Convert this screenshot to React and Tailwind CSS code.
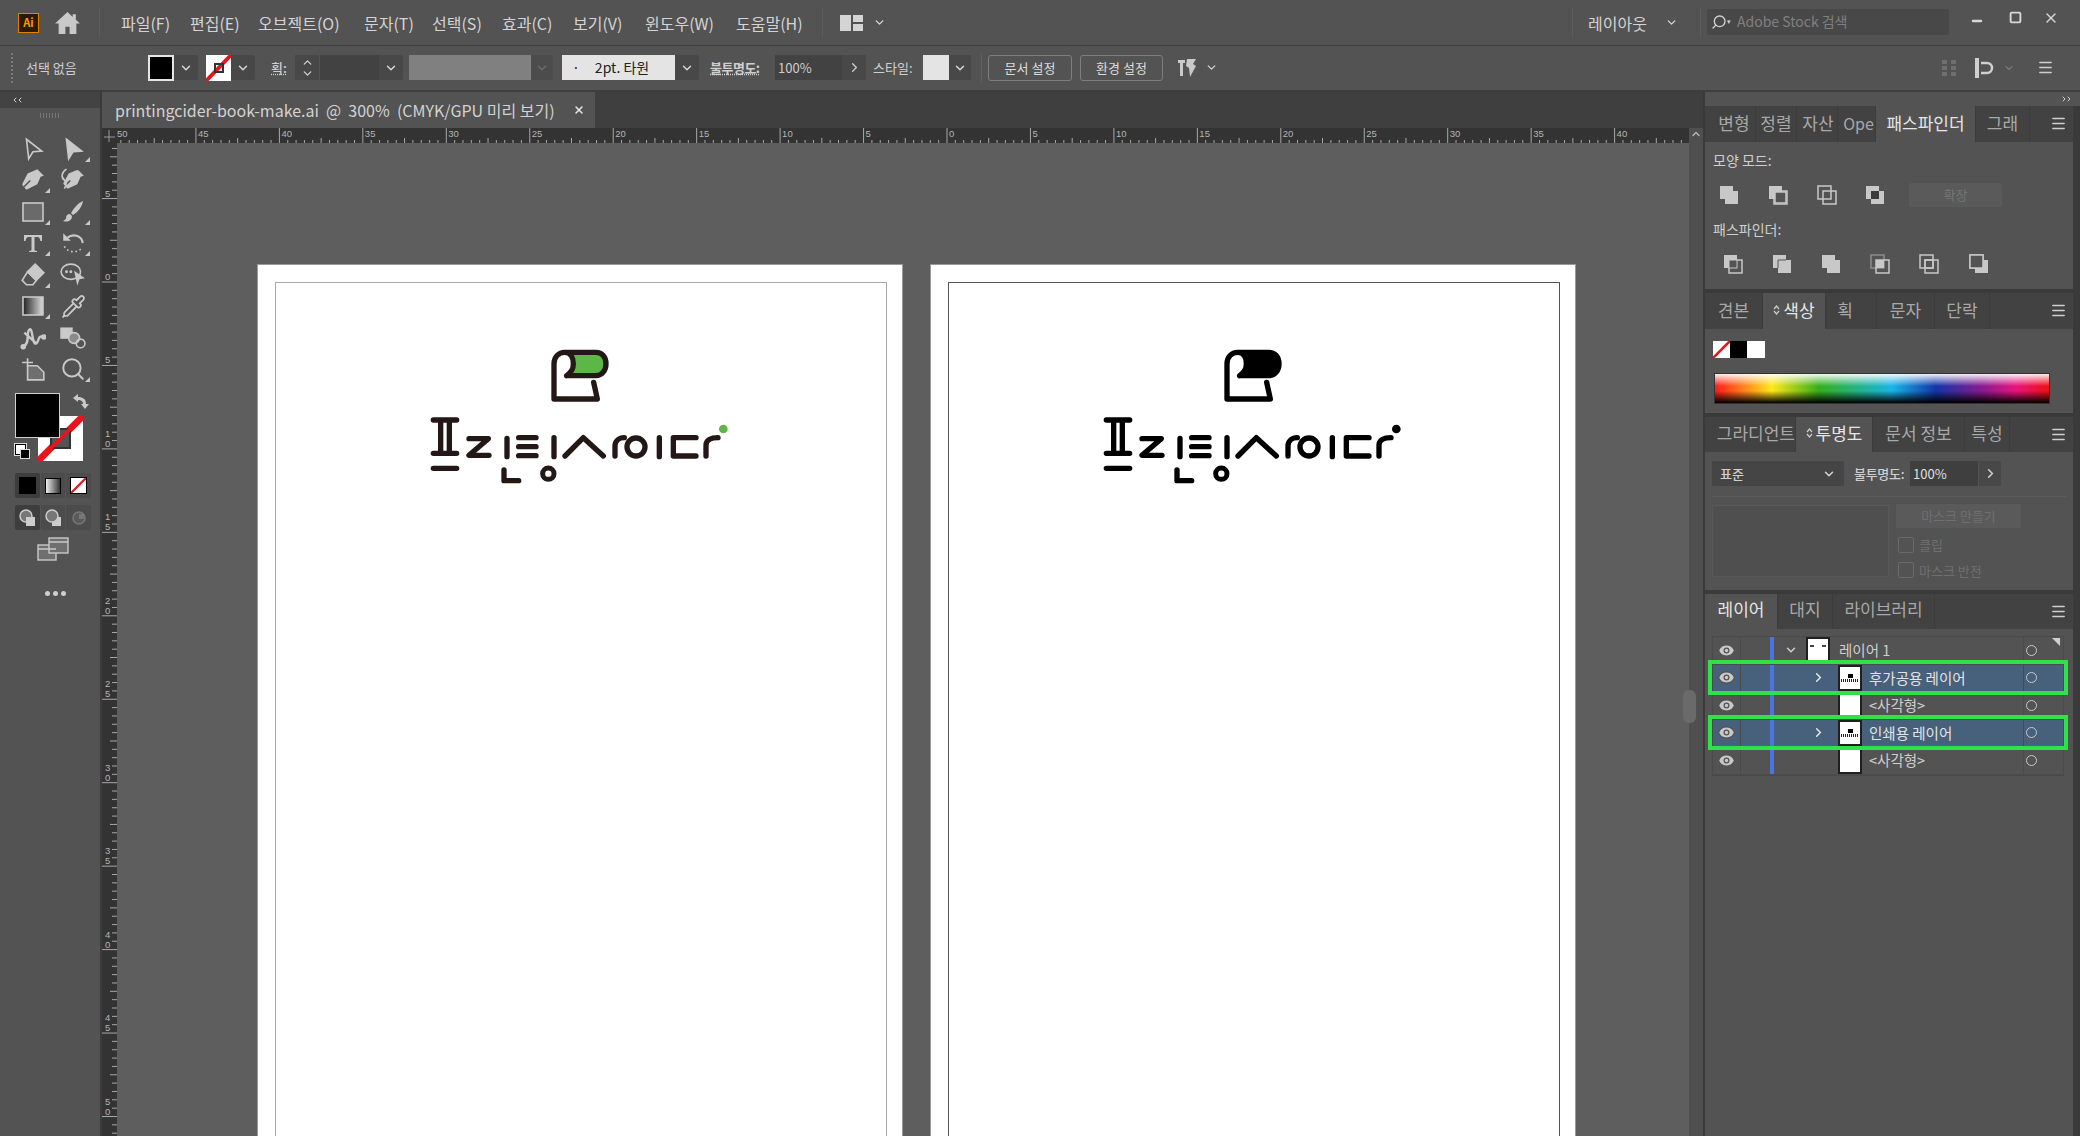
import { ChevronDown, ChevronRight, ChevronUp, ChevronLeft, Eye, Search, Pipette, Menu, Minus, Square, X } from 'lucide-react'

const icon = '#c9c9c9'

const menus = [
  ['파일(F)', 51], ['편집(E)', 50], ['오브젝트(O)', 88], ['문자(T)', 50], ['선택(S)', 52],
  ['효과(C)', 53], ['보기(V)', 54], ['윈도우(W)', 73], ['도움말(H)', 70],
]

function Chev({ size = 14, className = 'text-[#d8d8d8]' }) {
  return <ChevronDown size={size} strokeWidth={2.5} className={className} />
}

function NoneSwatch({ className }) {
  return (
    <svg viewBox="0 0 20 20" preserveAspectRatio="none" className={className}>
      <rect width="20" height="20" fill="#fff" />
      <line x1="0" y1="20" x2="20" y2="0" stroke="#e8141c" strokeWidth="3" />
    </svg>
  )
}

function TitleBar() {
  return (
    <div className="h-[45px] shrink-0 flex items-center bg-[#535353] text-[#d4d4d4] text-[16px] relative">
      <div className="ml-[18px] w-[21px] h-[20px] bg-[#2d1a05] border border-[#e67e00] flex items-center justify-center text-[11px] font-bold leading-none text-[#ff9a00]">Ai</div>
      <svg width="25" height="23" viewBox="0 0 24 22" fill="#c9c9c9" className="ml-[16px]">
        <path d="M12 1L0 12h3.500v10H10v-7h4v7h6.500V12H24l-4-3.700V3h-3v2.600z" />
      </svg>
      <div className="ml-[19px] w-px h-[30px] bg-[#5c5c5c]" />
      <div className="ml-[21px] flex gap-[18px]">
        {menus.map(([label, w]) => (
          <span key={label} style={{ width: w }} className="whitespace-nowrap leading-none">{label}</span>
        ))}
      </div>
      <div className="ml-[16px] w-px h-[30px] bg-[#5c5c5c]" />
      <svg width="24" height="18" viewBox="0 0 24 18" className="ml-[17px]">
        <rect x="0" y="1" width="11" height="16" fill="#d4d4d4" />
        <rect x="13" y="1" width="10" height="7" fill="#d4d4d4" />
        <rect x="13" y="10" width="10" height="7" fill="#d4d4d4" />
      </svg>
      <Chev size={13} className="ml-[9px] text-[#d8d8d8]" />
      <div className="ml-auto flex items-center pr-[6px]">
        <div className="w-px h-[30px] bg-[#5c5c5c] mr-[15px]" />
        <span className="w-[63px] whitespace-nowrap">레이아웃</span>
        <Chev size={13} className="ml-[14px]" />
        <div className="w-px h-[30px] bg-[#5c5c5c] ml-[22px] mr-[6px]" />
        <div className="w-[242px] h-[26px] bg-[#484848] rounded-[2px] flex items-center px-[4px] text-[14px] text-[#808080] mb-[2px]">
          <Search size={16} strokeWidth={2} className="text-[#d4d4d4] -scale-x-100" />
          <span className="text-[#d4d4d4] text-[7px] mr-[6px]">▾</span>
          Adobe Stock 검색
        </div>
        <div className="ml-[7px] w-[118px] h-[24px] mb-[10px] flex items-center text-[#d8d8d8]">
          <span className="w-[41px] flex justify-center"><Minus size={14} strokeWidth={4} className="mt-[6px]" /></span>
          <span className="w-[36px] flex justify-center"><Square size={13} strokeWidth={3.5} /></span>
          <span className="w-[36px] flex justify-center"><X size={16} strokeWidth={2} /></span>
        </div>
      </div>
    </div>
  )
}

function Seg({ w, ml = 0, className = '', children }) {
  return <div style={{ width: w, marginLeft: ml }} className={`h-[25px] shrink-0 flex items-center justify-center ${className}`}>{children}</div>
}

function ControlBar() {
  return (
    <div className="h-[47px] shrink-0 bg-[#535353] border-y border-[#3e3e3e] border-b-2 flex items-center text-[13px] text-[#cfcfcf] pb-[1px]">
      <div className="ml-[11px] h-[30px] border-l-2 border-dotted border-[#7a7a7a]" />
      <span className="ml-[13px] w-[58px] whitespace-nowrap">선택 없음</span>
      <div style={{ marginLeft: 64 }} className="w-[26px] h-[26px] shrink-0 bg-black border-2 border-[#e6e6e6]" />
      <Seg w={24} className="bg-[#484848] rounded-r-[2px]"><Chev /></Seg>
      <div className="ml-[8px] w-[25px] h-[26px] shrink-0 relative">
        <NoneSwatch className="w-full h-full" />
        <div className="absolute left-[8px] top-[8px] w-[10px] h-[10px] border-2 border-[#333]" />
      </div>
      <Seg w={24} className="bg-[#484848] rounded-r-[2px]"><Chev /></Seg>
      <span className="ml-[16px] w-[17px] font-medium underline decoration-dotted whitespace-nowrap">획:</span>
      <Seg w={24} ml={7} className="bg-[#484848] flex-col"><ChevronUp size={13} strokeWidth={2.5} className="-mb-[2px]" /><ChevronDown size={13} strokeWidth={2.5} /></Seg>
      <Seg w={59} ml={1} className="bg-[#424242]" />
      <Seg w={24} className="bg-[#484848] rounded-r-[2px]"><Chev /></Seg>
      <Seg w={122} ml={6} className="bg-[#808080]" />
      <Seg w={22} className="bg-[#4c4c4c]"><Chev className="text-[#6c6c6c]" /></Seg>
      <Seg w={113} ml={9} className="bg-[#e4e4e4] text-[#222] text-[14px] justify-start pl-[10px]">
        <span className="mr-[15px]">·</span>2pt. 타원
      </Seg>
      <Seg w={24} className="bg-[#484848] rounded-r-[2px]"><Chev /></Seg>
      <span className="ml-[11px] w-[56px] font-semibold underline decoration-dotted whitespace-nowrap tracking-[-0.5px]">불투명도:</span>
      <Seg w={67} ml={9} className="bg-[#424242] justify-start pl-[3px]">100%</Seg>
      <Seg w={24} className="bg-[#484848]"><ChevronRight size={15} strokeWidth={2} /></Seg>
      <span className="ml-[7px] w-[44px] whitespace-nowrap">스타일:</span>
      <Seg w={26} ml={6} className="bg-[#e4e4e4]" />
      <Seg w={22} className="bg-[#484848]"><Chev /></Seg>
      <div className="ml-[10px] w-px h-[30px] bg-[#5e5e5e]" />
      <button className="ml-[6px] w-[84px] h-[26px] border border-[#7e7e7e] rounded-[3px] text-[#dcdcdc] whitespace-nowrap">문서 설정</button>
      <button className="ml-[8px] w-[83px] h-[26px] border border-[#7e7e7e] rounded-[3px] text-[#dcdcdc] whitespace-nowrap">환경 설정</button>
      <svg width="24" height="24" viewBox="0 0 24 24" className="ml-[13px]">
        <path d="M2 4h7v3H7v13H4V7H2zM11 3h9l-3 5 3 2-6 11-1-9-3-2z" fill="#c9c9c9" />
      </svg>
      <Chev size={13} className="ml-[5px]" />
      <div className="ml-auto flex items-center gap-[8px] pr-[26px]">
        <svg width="16" height="18" viewBox="0 0 16 18" fill="#6f6f6f">
          <rect x="1" y="1" width="5" height="4" /><rect x="10" y="1" width="5" height="4" /><rect x="1" y="7" width="5" height="4" /><rect x="10" y="7" width="5" height="4" /><rect x="1" y="13" width="5" height="4" /><rect x="10" y="13" width="5" height="4" />
        </svg>
        <svg width="22" height="22" viewBox="0 0 22 22" className="ml-[8px]">
          <rect x="2" y="1" width="4" height="20" fill="#cfcfcf" />
          <path d="M8 6h6a5 5 0 0 1 0 10H8" fill="none" stroke="#cfcfcf" strokeWidth="2.5" />
        </svg>
        <Chev size={12} className="text-[#777] mr-[14px]" />
        <Menu size={17} strokeWidth={2} className="text-[#cfcfcf]" />
      </div>
    </div>
  )
}

function Corner() {
  return <span className="absolute right-[3px] bottom-[3px] w-0 h-0 border-l-[5px] border-l-transparent border-b-[5px] border-b-[#c9c9c9]" />
}

function Ti({ children, corner }) {
  return (
    <div className="relative w-[40px] h-[31.5px] flex items-center justify-center">
      {children}
      {corner && <Corner />}
    </div>
  )
}

function G({ children, size = 26 }) {
  return <svg width={size} height={size} viewBox="0 0 24 24" fill="none" stroke={icon} strokeWidth="1.5">{children}</svg>
}

function Tools() {
  return (
    <div className="w-[102px] shrink-0 border-r-2 border-[#3a3a3a] bg-[#535353] flex flex-col">
      <div className="h-[16px] bg-[#434343] flex items-center pl-[11px] text-[#cfcfcf]">
        <ChevronLeft size={8} strokeWidth={3} /><ChevronLeft size={8} strokeWidth={3} className="-ml-[3px]" />
      </div>
      <div className="mt-[5px] mx-auto w-[20px] h-[5px] border-x-0 bg-[repeating-linear-gradient(90deg,#777_0,#777_1px,transparent_1px,transparent_3px)]" />
      <div className="mt-[15px] ml-[13px] grid grid-cols-[40px_40px]">
        <Ti><G><path d="M6 3l14 11-8 .5L8 21z" /></G></Ti>
        <Ti corner><G><path d="M6 3l14 11-8 .5L8 21z" fill={icon} /></G></Ti>
        <Ti corner><G><path d="M16 2l6 6-3 1-3 7-10 5-2-2 6-6-1-1-6 6-1-2 5-10 7-3z" fill={icon} stroke="none" /></G></Ti>
        <Ti><G><path d="M17 3l5 5-3 1-3 7-9 4-2-2 5-5-1-1-5 5-1-2 5-9 7-3z" fill={icon} stroke="none" /><path d="M6 2C1 5 1 10 4 12c2 2 2 5 0 8" /></G></Ti>
        <Ti corner><svg width="24" height="22" viewBox="0 0 24 22"><rect x="2" y="2" width="20" height="18" fill="#6a6a6a" stroke={icon} strokeWidth="1.6" /></svg></Ti>
        <Ti corner><svg width="24" height="24" viewBox="0 0 24 24" fill={icon}><path d="M22 1c-5 2-9 7-12 12l2 2c5-3 9-8 10-14zM9 14c-3 0-4 2-4 4 0 1-1 2-3 3 4 1.500 9 0 9-5z" /></svg></Ti>
        <Ti corner><svg width="24" height="24" viewBox="0 0 24 24" fill={icon}><path d="M3 4h18v6h-1.600c-.3-2-1-4-3-4H13.500v13.500l2.500.5v1H8v-1l2.500-.5V6H7.600c-2 0-2.700 2-3 4H3z" /></svg></Ti>
        <Ti corner><G><path d="M7 7c5-4 13-2 14 5" strokeWidth="2" /><path d="M3 3v7h7z" fill={icon} stroke="none" /><path d="M4 15c3 6 12 7 17 1" strokeDasharray="1.500 2.500" /></G></Ti>
        <Ti corner><G><path d="M14 2l8 8-7 7-8-8z" fill={icon} /><path d="M7 9l8 8-3 4H6l-4-4z" /></G></Ti>
        <Ti><G><ellipse cx="10" cy="9" rx="9" ry="7" /><circle cx="6" cy="9" r=".6" fill={icon} /><circle cx="10" cy="9" r=".6" fill={icon} /><path d="M13 8l10 7-5 1-2 6z" fill={icon} stroke="none" /></G></Ti>
        <Ti corner>
          <svg width="24" height="22" viewBox="0 0 24 22">
            <defs><linearGradient id="gt"><stop offset="0" stopColor="#222" /><stop offset="1" stopColor="#ddd" /></linearGradient></defs>
            <rect x="2" y="2" width="20" height="18" fill="url(#gt)" stroke={icon} strokeWidth="1.6" />
          </svg>
        </Ti>
        <Ti><Pipette size={25} stroke={icon} strokeWidth={1.7} /></Ti>
        <Ti><G><circle cx="3" cy="20" r="1.800" fill={icon} /><circle cx="22" cy="11" r="1.800" fill={icon} /><path d="M3 20C10 17 5 6 9 4c3-1 2 15 6 13 3-2 1-8 7-6M4 7l11 10" strokeWidth="2.200" /></G></Ti>
        <Ti><G><rect x="1" y="3" width="10" height="9" fill={icon} /><circle cx="13" cy="12" r="5" fill="#8a8a8a" /><circle cx="19" cy="17" r="4" /></G></Ti>
        <Ti><G><path d="M7 2v8M2 6h10" /><path d="M7 9h9l6 6v7H7z" fill="#6f6f6f" /></G></Ti>
        <Ti corner><Search size={26} stroke={icon} strokeWidth={1.800} /></Ti>
      </div>
      <div className="relative mt-[8px] ml-[10px] h-[70px]">
        <div className="absolute left-[5px] top-0 w-[45px] h-[45px] bg-black border border-[#cfcfcf] z-10" />
        <div className="absolute left-[28px] top-[23px] w-[45px] h-[45px]">
          <NoneSwatch className="w-full h-full" />
          <div className="absolute left-[12px] top-[12px] w-[21px] h-[21px] bg-[#535353] border-2 border-[#333]" />
          <svg viewBox="0 0 45 45" className="absolute inset-0"><line x1="0" y1="45" x2="45" y2="0" stroke="#e8141c" strokeWidth="3.500" /></svg>
        </div>
        <svg width="18" height="18" viewBox="0 0 18 18" className="absolute left-[62px] top-[0px]" fill={icon}>
          <path d="M1 5l5-4v3c5 0 8 2 8 7h3l-4 5-4-5h2c0-3-2-4-5-4v2z" />
        </svg>
        <div className="absolute left-[5px] top-[51px] w-[11px] h-[11px] bg-white border border-black outline outline-[#ddd]" />
        <div className="absolute left-[10px] top-[56px] w-[10px] h-[10px] bg-black border border-[#ddd]" />
      </div>
      <div className="mt-[10px] ml-[15px] w-[76px] h-[25px] flex gap-px">
        <div className="flex-1 bg-[#3d3d3d] rounded-[2px] flex items-center justify-center"><div className="w-[17px] h-[17px] bg-black" /></div>
        <div className="flex-1 bg-[#4c4c4c] flex items-center justify-center"><div className="w-[16px] h-[16px] border border-black bg-[linear-gradient(90deg,#eee,#333)]" /></div>
        <div className="flex-1 bg-[#4c4c4c] flex items-center justify-center"><div className="border border-black"><NoneSwatch className="w-[15px] h-[15px] block" /></div></div>
      </div>
      <div className="mt-[7px] ml-[15px] w-[76px] h-[25px] flex gap-px">
        <div className="flex-1 bg-[#3d3d3d] rounded-[2px] flex items-center justify-center">
          <svg width="18" height="18" viewBox="0 0 18 18"><circle cx="8" cy="7" r="6" fill="#777" stroke="#ccc" strokeWidth="1.500" /><rect x="8" y="8" width="9" height="9" fill="#ccc" /></svg>
        </div>
        <div className="flex-1 bg-[#4c4c4c] flex items-center justify-center">
          <svg width="18" height="18" viewBox="0 0 18 18"><rect x="8" y="8" width="9" height="9" fill="#ccc" /><circle cx="8" cy="7" r="6" fill="#777" stroke="#ccc" strokeWidth="1.500" /></svg>
        </div>
        <div className="flex-1 bg-[#4c4c4c] flex items-center justify-center">
          <svg width="18" height="18" viewBox="0 0 18 18"><circle cx="9" cy="9" r="6" fill="#5a5a5a" stroke="#777" strokeWidth="1.500" /><rect x="9" y="5" width="5" height="5" fill="#777" /></svg>
        </div>
      </div>
      <svg width="32" height="24" viewBox="0 0 32 24" className="mt-[7px] ml-[37px]" fill="#6f6f6f" stroke={icon} strokeWidth="1.400">
        <rect x="1" y="8" width="18" height="15" /><rect x="12" y="1" width="19" height="15" />
        <path d="M1 12h18M12 5h19" />
      </svg>
      <div className="mt-[30px] ml-[45px] flex gap-[3px]">
        <span className="w-[5px] h-[5px] rounded-full bg-[#cfcfcf]" /><span className="w-[5px] h-[5px] rounded-full bg-[#cfcfcf]" /><span className="w-[5px] h-[5px] rounded-full bg-[#cfcfcf]" />
      </div>
    </div>
  )
}

const unit = 83.45

function RulerTop() {
  const ticks = []
  for (let i = -100; i < 100; i++) {
    const x = 845 + (i * unit) / 10
    if (x > 1587) continue
    const major = i % 10 === 0
    if (x >= 14) ticks.push(<line key={i} x1={x} x2={x} y1={major ? 0 : i % 5 === 0 ? 10 : 12} y2="15" stroke="#a8a8a8" strokeWidth="1" />)
    if (major && x < 1560) ticks.push(<text key={`t${i}`} x={Math.max(x + 2, 15)} y="9" fontSize="9.500" fill="#b5b5b5">{Math.abs(i / 2)}</text>)
  }
  return (
    <svg width="1587" height="15" className="block shrink-0 bg-[#333333]" style={{ fontFamily: 'Liberation Sans' }}>
      {ticks}
      <path d="M7 2v12M2 9h11" stroke="#999" />
    </svg>
  )
}

function RulerLeft() {
  const ticks = []
  // stops short of the 55 mark, which would fall below the window
  for (let i = -20; i < 103; i++) {
    const y = 139 + (i * unit) / 10
    if (y < 0) continue
    const major = i % 10 === 0
    ticks.push(<line key={i} y1={y} y2={y} x1={major ? 0 : i % 5 === 0 ? 8 : 10} x2="15" stroke="#a8a8a8" strokeWidth="1" />)
    if (major) {
      const digits = String(Math.abs(i / 2)).split('')
      digits.forEach((d, n) => {
        ticks.push(<text key={`t${i}${n}`} x="3" y={y - 2 - (digits.length - 1 - n) * 10} fontSize="9.500" fill="#b5b5b5">{d}</text>)
      })
    }
  }
  return (
    <svg width="15" height="993" className="block shrink-0 bg-[#333333]" style={{ fontFamily: 'Liberation Sans' }}>
      {ticks}
    </svg>
  )
}

function Logo({ accent }) {
  const ink = accent ? '#231815' : '#000'
  const fill = accent || '#000'
  return (
    <svg width="340" height="170" viewBox="0 0 1020 510" fill="none" stroke={ink} strokeWidth="16" strokeLinecap="round" strokeLinejoin="round">
      <path d="M492 70h66c16 0 26 14 26 31s-10 34-28 34H474c14-16 20-40 18-65z" fill={fill} stroke="none" />
      <path d="M470 137h88c18 0 30-16 30-36s-12-34-30-34H464c-18 0-32 14-32 34v106h130l-11-50M464 67c18 0 26 16 26 34s-6 24-20 36" />
      <path d="M70 270h70M92 270v100M118 270v100M70 370h70M70 415h70" />
      <path d="M177 326h58l-58 50h60M291 325v55M282 420v32h44M326 323h52M326 350h52M326 377h52M432 323v57" />
      <circle cx="415" cy="431" r="17" strokeWidth="15" />
      <path d="M465 378l55-55 60 55M615 378v-30c0-15 12-25 28-25" />
      <circle cx="678" cy="351" r="27" />
      <path d="M748 323v57M790 323v55h68M790 323h68M888 378v-32c0-15 14-23 36-23" />
      <circle cx="940" cy="297" r="13" fill={fill} stroke="none" />
    </svg>
  )
}

function Artboard({ accent, innerBorder }) {
  return (
    <div className="w-[644px] h-[900px] shrink-0 bg-white pt-[17px] pl-[17px] outline outline-[#9a9a9a]">
      <div className={`w-[612px] h-[880px] border pt-[47px] pl-[134px] ${innerBorder}`}>
        <Logo accent={accent} />
      </div>
    </div>
  )
}

function Center() {
  return (
    <div className="w-[1601px] shrink-0 flex flex-col min-h-0">
      <div className="h-[36px] shrink-0 bg-[#3f3f3f] flex">
        <div className="w-[493px] bg-[#535353] flex items-center pl-[13px] pr-[10px] text-[16px] text-[#d2d2d2] whitespace-nowrap">
          <span>printingcider-book-make.ai&nbsp; @&nbsp; 300%&nbsp; (CMYK/GPU 미리 보기)</span>
          <X size={12} strokeWidth={3} className="ml-auto text-[#e8e8e8]" />
        </div>
      </div>
      <div className="flex shrink-0">
        <RulerTop />
        <div className="w-[14px] bg-[#4f4f4f] flex justify-center"><ChevronUp size={12} strokeWidth={2.5} className="text-[#bbb]" /></div>
      </div>
      <div className="flex flex-1 min-h-0">
        <RulerLeft />
        <div className="flex-1 min-w-0 bg-[#5e5e5e] overflow-hidden flex gap-[29px] pl-[141px] pt-[122px]">
          <Artboard accent="#5cb648" innerBorder="border-[#a8a8a8]" />
          <Artboard innerBorder="border-[#555555]" />
        </div>
        <div className="w-[14px] bg-[#4f4f4f] relative">
          <div className="absolute -left-[6px] top-[547px] w-[13px] h-[33px] bg-[#6a6a6a] rounded-[6px]" />
        </div>
      </div>
    </div>
  )
}

function Sort() {
  return (
    <svg width="7" height="12" viewBox="0 0 7 12" fill="none" stroke="#cfcfcf" strokeWidth="1.200" className="mr-[3px] shrink-0">
      <path d="M1 5l2.500-3L6 5M1 7l2.500 3L6 7" />
    </svg>
  )
}

function Tabs({ tabs, active, h = 'h-[36px]', pb = 'pb-[2px]' }) {
  return (
    <div className={`${h} shrink-0 bg-[#424242] flex items-stretch text-[17px] text-[#a8a8a8] relative`}>
      {tabs.map(([label, w, extra = 'justify-center'], i) => (
        <div
          key={label}
          style={{ width: w }}
          className={`flex items-center whitespace-nowrap border-r border-[#3c3c3c] ${pb} ${extra} ${i === active ? 'bg-[#535353] text-[#e6e6e6]' : ''}`}
        >
          {i === active && label !== '패스파인더' && label !== '레이어' && <Sort />}
          {label}
        </div>
      ))}
      <Menu size={17} strokeWidth={2} className="absolute right-[6px] top-[9px] text-[#cfcfcf]" />
    </div>
  )
}

function Pf({ back = {}, front = {}, top }) {
  const line = { fill: 'none', stroke: '#c8c8c8', strokeWidth: 1.500 }
  const solid = { fill: '#c8c8c8' }
  return (
    <svg width="20" height="20" viewBox="0 0 20 20">
      <rect x="1" y="1" width="13" height="13" {...(back.solid ? solid : line)} opacity={back.dim ? 0.5 : 1} />
      <rect x="6" y="6" width="13" height="13" {...(front.solid ? solid : line)} />
      {top}
    </svg>
  )
}

const darkInner = <rect x="6" y="6" width="8" height="8" fill="#3c3c3c" />
const bgInner = <rect x="7" y="7" width="11" height="11" fill="#535353" stroke="#c8c8c8" strokeWidth="1.500" />

function Pathfinder() {
  return (
    <div className="h-[147px] shrink-0 bg-[#535353] text-[14px] text-[#cfcfcf] px-[8px] overflow-hidden">
      <div className="pt-[8px] h-[34px]">모양 모드:</div>
      <div className="h-[37px] flex items-center">
        <span className="ml-[6px] w-[49px]"><Pf back={{ solid: 1 }} front={{ solid: 1 }} /></span>
        <span className="w-[49px]"><Pf back={{ solid: 1 }} top={bgInner} /></span>
        <span className="w-[48px]"><Pf /></span>
        <span className="w-[44px]"><Pf back={{ solid: 1 }} front={{ solid: 1 }} top={darkInner} /></span>
        <div className="w-[93px] h-[24px] bg-[#5a5a5a] text-[13px] text-[#757575] rounded-[2px] flex items-center justify-center">확장</div>
      </div>
      <div className="mt-[6px] h-[26px]">패스파인더:</div>
      <div className="h-[44px] flex items-center pb-[6px]">
        <span className="ml-[10px] w-[49px]"><Pf back={{ solid: 1 }} top={<rect x="6" y="6" width="8" height="8" fill="#535353" stroke="#c8c8c8" />} /></span>
        <span className="w-[49px]"><Pf back={{ solid: 1 }} front={{ solid: 1 }} top={<path d="M6 14V6h8" fill="none" stroke="#535353" strokeWidth="1" />} /></span>
        <span className="w-[49px]"><Pf back={{ solid: 1 }} front={{ solid: 1 }} /></span>
        <span className="w-[49px]"><Pf back={{ dim: 1 }} top={<rect x="6" y="6" width="8" height="8" fill="#c8c8c8" />} /></span>
        <span className="w-[50px]"><Pf top={<rect x="6" y="6" width="8" height="8" fill="none" stroke="#c8c8c8" strokeWidth="1.500" />} /></span>
        <span className="w-[30px]"><Pf front={{ solid: 1 }} top={<rect x="1" y="1" width="13" height="13" fill="#535353" stroke="#c8c8c8" strokeWidth="1.500" />} /></span>
      </div>
    </div>
  )
}

function ColorPanel() {
  return (
    <div className="h-[84px] shrink-0 bg-[#535353] pl-[8px] pt-[12px]">
      <div className="flex h-[17px]">
        <NoneSwatch className="w-[17px] h-[17px]" />
        <div className="w-[17px] bg-black" />
        <div className="w-[18px] bg-white" />
      </div>
      <div className="mt-[15px] ml-px w-[336px] h-[31px] border border-[#333] bg-[linear-gradient(180deg,rgba(255,255,255,0.92)_0%,rgba(255,255,255,0)_42%,rgba(0,0,0,0)_58%,#000_100%),linear-gradient(90deg,#ff1a1a_0%,#ffe81a_17%,#35b01a_31%,#19b5e8_53%,#1235a8_66%,#8a1a90_80%,#e8147a_90%,#ee1010_100%)]" />
    </div>
  )
}

function Transparency() {
  return (
    <div className="h-[138px] shrink-0 bg-[#535353] text-[13px] relative">
      <div className="pt-[9px] pl-[7px] flex items-center text-[#cfcfcf]">
        <div className="w-[132px] h-[25px] bg-[#454545] rounded-[2px] flex items-center justify-between px-[8px] font-medium">표준<Chev /></div>
        <span className="ml-[10px] w-[56px] whitespace-nowrap tracking-[-0.3px] font-medium">불투명도:</span>
        <div className="w-[68px] h-[25px] bg-[#3f3f3f] flex items-center pl-[3px] text-[#e0e0e0]">100%</div>
        <div className="ml-px w-[22px] h-[25px] bg-[#484848] flex items-center justify-center"><ChevronRight size={15} strokeWidth={2.5} /></div>
      </div>
      <div className="mt-[10px] mx-[7px] h-px bg-[#5c5c5c]" />
      <div className="mt-[8px] ml-[7px] flex text-[#6f6f6f]">
        <div className="w-[177px] h-[72px] bg-[#4f4f4f] border border-[#585858]" />
        <div className="ml-[7px]">
          <div className="w-[125px] h-[24px] -mt-[1px] bg-[#5a5a5a] rounded-[2px] flex items-center justify-center">마스크 만들기</div>
          <div className="mt-[7px] ml-[2px] flex items-center gap-[5px]"><span className="w-[16px] h-[16px] border border-[#6a6a6a] rounded-[2px]" />클립</div>
          <div className="mt-[6px] ml-[2px] flex items-center gap-[5px]"><span className="w-[16px] h-[16px] border border-[#6a6a6a] rounded-[2px]" />마스크 반전</div>
        </div>
      </div>
    </div>
  )
}

const rows = [
  { label: '레이어 1', thumb: 'top', indent: 0, open: true },
  { label: '후가공용 레이어', thumb: 'logo', indent: 1, hi: true },
  { label: '<사각형>', thumb: 'blank', indent: 1 },
  { label: '인쇄용 레이어', thumb: 'logo', indent: 1, hi: true },
  { label: '<사각형>', thumb: 'blank', indent: 1 },
]

function Thumb({ kind }) {
  return (
    <div className={`w-[24px] h-full bg-white border-x-2 border-[#1f1f1f] flex flex-col items-center justify-center overflow-hidden ${kind === 'logo' ? 'border-y-2' : ''} ${kind === 'top' ? 'border-t-2' : ''} ${kind === 'blank' ? 'border-b-2' : ''}`}>
      {kind === 'logo' && <>
        <div className="w-[5px] h-[4px] bg-black mb-px" />
        <div className="w-[18px] h-[3px] bg-[repeating-linear-gradient(90deg,#222_0,#222_1px,#fff_1px,#fff_2px)]" />
      </>}
      {kind === 'top' && <div className="w-[16px] h-[2px] mb-[10px] bg-[linear-gradient(90deg,#444_0,#444_25%,#fff_25%,#fff_75%,#444_75%)]" />}
    </div>
  )
}

function Layers() {
  return (
    <div className="flex-1 min-h-0 bg-[#535353] pt-[7px] pl-[7px] pr-[8px]">
      <div className="w-[352px] relative border border-[#4a4a4a]">
        {rows.map((r, i) => (
          <div key={i} className={`relative h-[27.5px] flex items-center text-[14.500px] border-b border-[#4c4c4c] ${r.hi ? 'bg-[#47607c] text-[#e4e4e4]' : 'text-[#cfcfcf]'}`}>
            <div className="w-[28px] h-full flex items-center justify-center border-r border-[#4a4a4a]"><Eye size={19} fill="#c9c9c9" stroke="#535353" strokeWidth={1.600} /></div>
            <div className="w-[29px] h-full" />
            <div className="w-[4px] h-full bg-[#4a74e0]" />
            {r.indent === 0 ? (
              <>
                <ChevronDown size={14} strokeWidth={2.5} className="ml-[10px]" />
                <div className="ml-[8px] h-full"><Thumb kind={r.thumb} /></div>
                <span className="ml-[9px] w-[130px]">{r.label}</span>
              </>
            ) : (
              <>
                <div className="ml-[37px] w-[14px]">{r.thumb === 'logo' && <ChevronRight size={15} strokeWidth={2.5} className="text-[#e4e4e4]" />}</div>
                <div className="ml-[13px] h-full"><Thumb kind={r.thumb} /></div>
                <span className="ml-[7px] whitespace-nowrap w-[107px]">{r.label}</span>
              </>
            )}
            <div className="absolute left-[310px] top-0 h-full border-l border-[#4a4a4a]" />
            <span className="absolute left-[313px] w-[11px] h-[11px] rounded-full border-[1.500px] border-[#c9c9c9]" />
            {i === 0 && <span className="absolute right-[3px] top-[1px] w-0 h-0 border-l-[8px] border-l-transparent border-t-[8px] border-t-[#cfcfcf]" />}
            {r.hi && <div className="absolute -left-[5px] -right-[5px] -top-[5px] -bottom-[4px] border-[4px] border-[#2ee24a] z-10" />}
          </div>
        ))}
      </div>
    </div>
  )
}

function Dock() {
  return (
    <div className="flex-1 min-w-0 flex flex-col bg-[#3a3a3a] border-l-2 border-[#3a3a3a]">
      <div className="h-[14px] bg-[#535353] flex justify-end items-center pr-[7px] text-[#cfcfcf]">
        <ChevronRight size={8} strokeWidth={3} /><ChevronRight size={8} strokeWidth={3} className="-ml-[3px]" />
      </div>
      <div className="flex-1 min-h-0 flex flex-col gap-[4px] mr-[7px]">
        <div className="flex flex-col">
          <Tabs active={4} tabs={[['변형', 51, 'justify-center pl-[8px]'], ['정렬', 41], ['자산', 41, 'justify-center pl-[2px]'], ['Ope', 38, 'justify-center pl-[4px] text-[16px]'], ['패스파인더', 100], ['그래', 54]]} pb="pb-[3px]" />
          <Pathfinder />
        </div>
        <div className="flex flex-col">
          <Tabs active={1} tabs={[['견본', 58], ['색상', 63], ['획', 51, 'justify-center pr-[12px]'], ['문자', 58], ['단락', 55]]} pb="pb-[3px]" />
          <ColorPanel />
        </div>
        <div className="flex flex-col">
          <Tabs active={1} h="h-[35px]" pb="pb-[4px]" tabs={[['그라디언트', 91, 'justify-end'], ['투명도', 77], ['문서 정보', 92], ['특성', 45]]} />
          <Transparency />
        </div>
        <div className="flex-1 min-h-0 flex flex-col">
          <Tabs active={0} h="h-[35px]" pb="pb-[5px]" tabs={[['레이어', 73], ['대지', 55], ['라이브러리', 102]]} />
          <Layers />
        </div>
      </div>
    </div>
  )
}

export default function App() {
  return (
    <div className="w-[2080px] h-[1136px] overflow-hidden flex flex-col bg-[#535353] font-['Noto_Sans_CJK_KR','Noto_Sans',sans-serif]">
      <TitleBar />
      <ControlBar />
      <div className="flex flex-1 min-h-0">
        <Tools />
        <Center />
        <Dock />
      </div>
    </div>
  )
}
